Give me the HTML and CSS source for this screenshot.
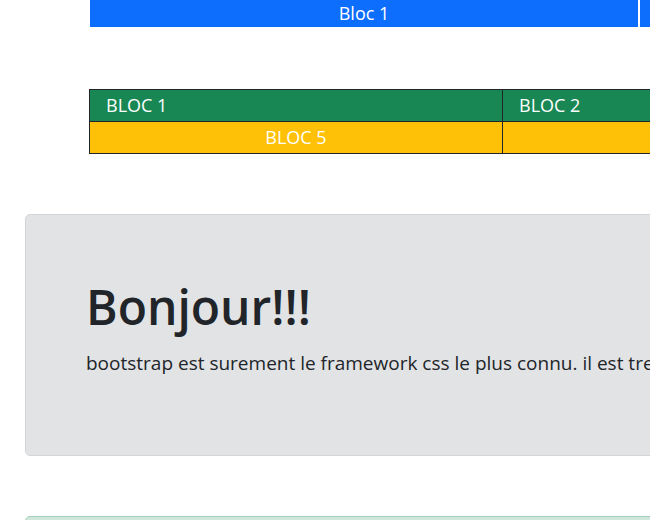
FILE: index.html
```html
<!DOCTYPE html>
<html lang="fr">
<head>
<meta charset="utf-8">
<link rel="stylesheet" href="styles.css">
</head>
<body>
<div class="page">
  <div class="blue-row">
    <div class="blue-cell wide">Bloc 1</div>
    <div class="blue-cell">Bloc 2</div>
  </div>

  <div class="grid">
    <div class="cell green">BLOC 1</div>
    <div class="cell green">BLOC 2</div>
    <div class="cell yellow center">BLOC 5</div>
    <div class="cell yellow"></div>
  </div>

  <div class="jumbo">
    <h1 class="jumbo-title">Bonjour!!!</h1>
    <p class="lead">bootstrap est surement le framework css le plus connu. il est tres utilisé</p>
  </div>

  <div class="alert"></div>
</div>
</body>
</html>
```

FILE: styles.css
```css
html, body {
  margin: 0;
  padding: 0;
  overflow: hidden;
  background: #fff;
}
body {
  font-family: "Open Sans", "Noto Sans", sans-serif;
  color: #212529;
}
.page {
  width: 1000px;
}
.blue-row {
  display: flex;
  gap: 2px;
  margin-left: 90px;
}
.blue-cell {
  background: #0d6efd;
  color: #fff;
  height: 27px;
  line-height: 27px;
  font-size: 18px;
  text-align: center;
  width: 300px;
}
.blue-cell.wide {
  width: 548px;
}
.grid {
  margin-top: 62px;
  margin-left: 89px;
  display: grid;
  grid-template-columns: 413px 413px;
  border-top: 1px solid #212529;
  border-left: 1px solid #212529;
}
.cell {
  height: 31px;
  line-height: 31px;
  font-size: 18px;
  color: #fff;
  padding-left: 16px;
  border-right: 1px solid #212529;
  border-bottom: 1px solid #212529;
}
.green { background: #198754; }
.yellow { background: #ffc107; }
.center { text-align: center; padding-left: 0; }
.jumbo {
  margin-top: 60px;
  margin-left: 25px;
  background: #e2e3e5;
  border: 1px solid #d3d6d8;
  border-radius: 5px;
  padding-left: 60px;
  box-sizing: border-box;
  height: 242px;
  white-space: nowrap;
}
.jumbo-title {
  margin: 63px 0 0;
  font-size: 48px;
  font-weight: 600;
  line-height: 1.2;
}
.lead {
  margin: 14px 0 0;
  font-size: 19px;
  font-weight: 400;
}
.alert {
  margin-top: 60px;
  margin-left: 25px;
  height: 60px;
  background: #d1e7dd;
  border: 1px solid #a3cfbb;
  border-radius: 5px;
}
```
